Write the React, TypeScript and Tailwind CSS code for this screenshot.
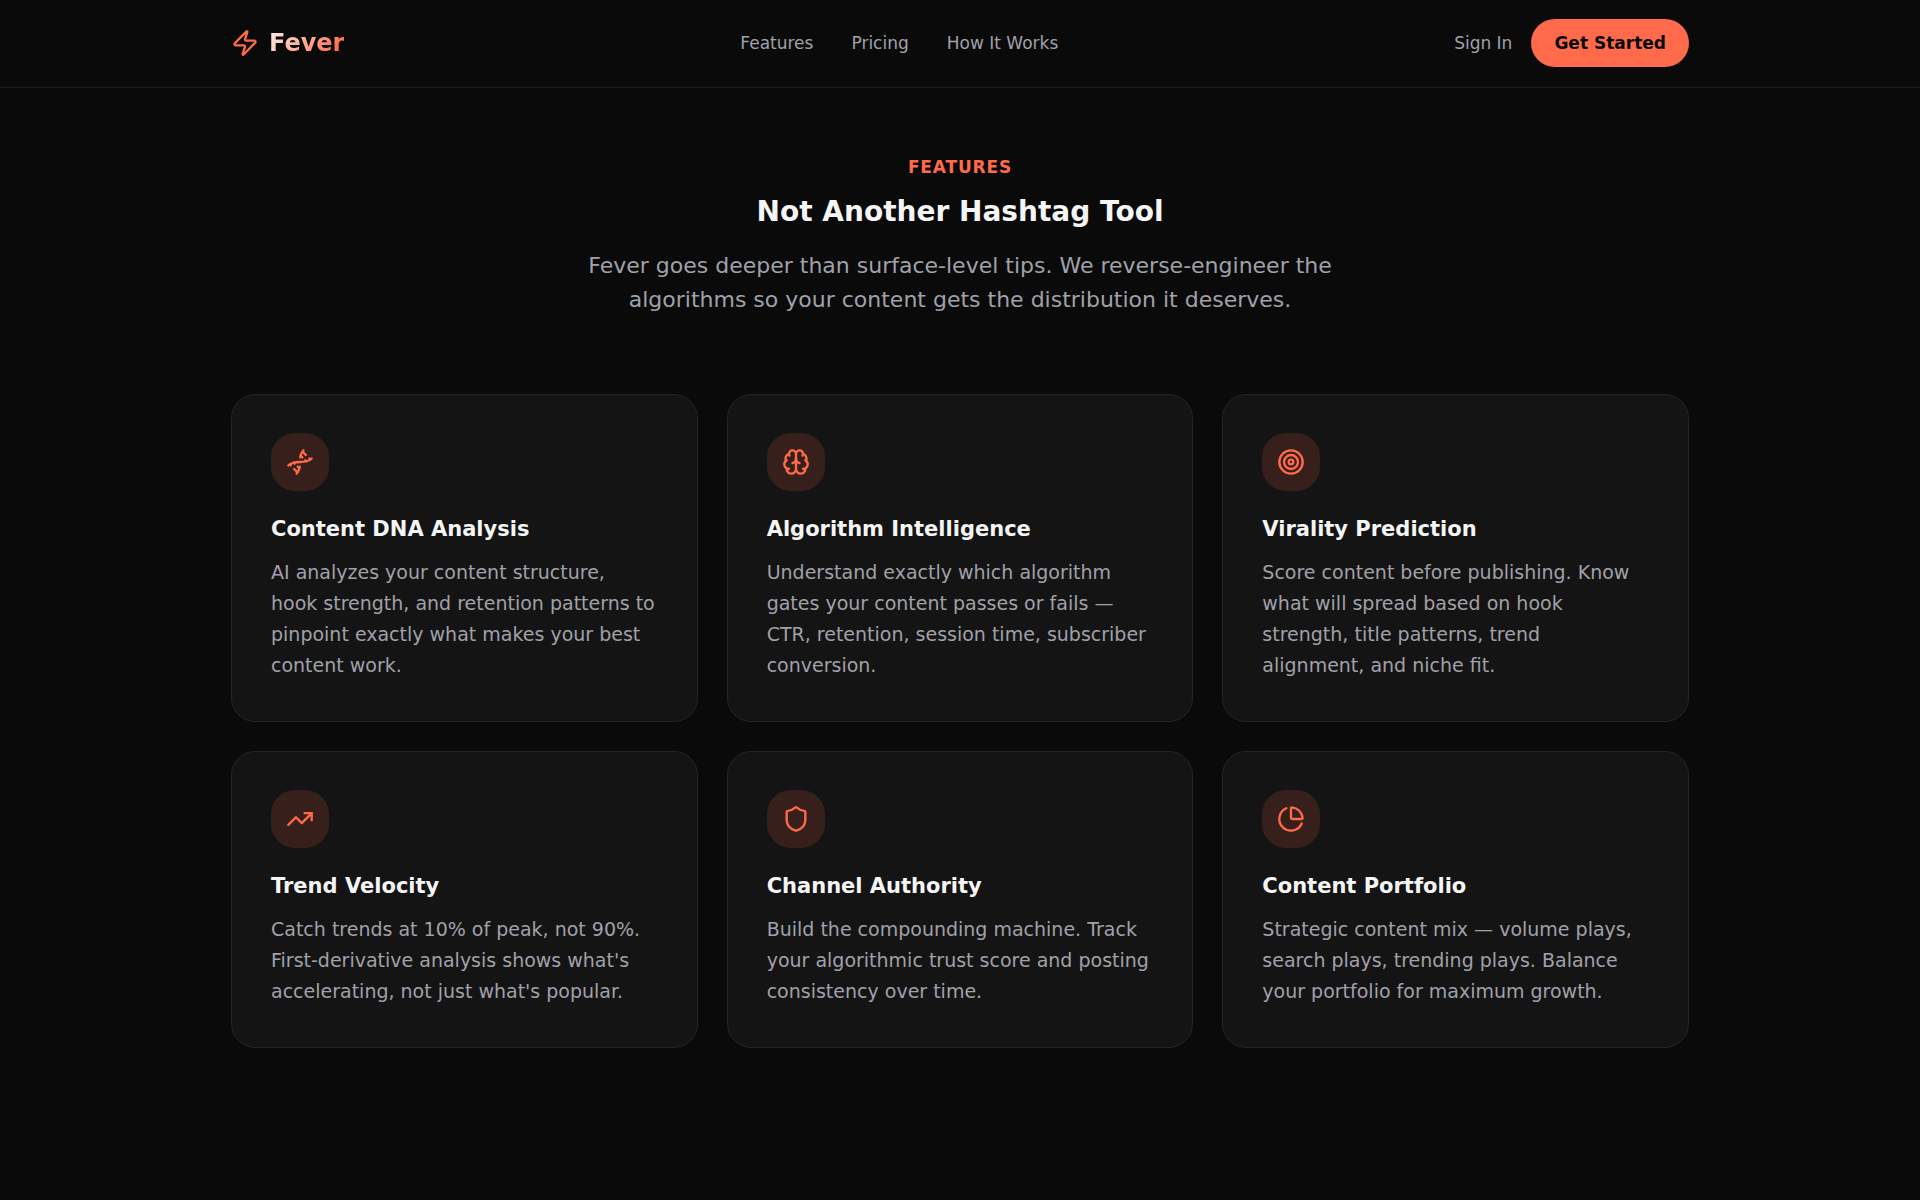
import React from "react";
import { Zap, Brain, Target, TrendingUp, Shield, PieChart, Dna } from "lucide-react";

const features = [
  { icon: Dna, title: "Content DNA Analysis", text: "AI analyzes your content structure, hook strength, and retention patterns to pinpoint exactly what makes your best content work." },
  { icon: Brain, title: "Algorithm Intelligence", text: "Understand exactly which algorithm gates your content passes or fails — CTR, retention, session time, subscriber conversion." },
  { icon: Target, title: "Virality Prediction", text: "Score content before publishing. Know what will spread based on hook strength, title patterns, trend alignment, and niche fit." },
  { icon: TrendingUp, title: "Trend Velocity", text: "Catch trends at 10% of peak, not 90%. First-derivative analysis shows what's accelerating, not just what's popular." },
  { icon: Shield, title: "Channel Authority", text: "Build the compounding machine. Track your algorithmic trust score and posting consistency over time." },
  { icon: PieChart, title: "Content Portfolio", text: "Strategic content mix — volume plays, search plays, trending plays. Balance your portfolio for maximum growth." },
];

export default function App() {
  return (
    <div className="min-h-screen bg-[#0a0a0a] font-['DejaVu_Sans',sans-serif] text-[#f5f5f5]">
      <header className="border-b border-[#1c1c1c]">
        <div className="mx-auto flex max-w-[1458px] items-center justify-between pt-[19px] pb-5 text-[17px] leading-6">
          <a href="#" className="flex items-center gap-2.5 text-2xl font-bold">
            <Zap size={28} className="text-[#ff6b4a]" />
            <span className="bg-linear-135 from-[#f5f5f5] to-[#ff6b4a] to-85% bg-clip-text text-transparent">Fever</span>
          </a>
          <nav className="flex gap-[38px] text-[#a1a1aa]">
            <a href="#features">Features</a>
            <a href="#pricing">Pricing</a>
            <a href="#how">How It Works</a>
          </nav>
          <div className="flex items-center gap-[19px]">
            <a href="#signin" className="text-[#a1a1aa]">Sign In</a>
            <button type="button" className="rounded-full bg-[#ff6b4a] px-[23px] py-3 font-bold text-[#0a0a0a]">Get Started</button>
          </div>
        </div>
      </header>
      <main id="features" className="mx-auto max-w-[1458px] pt-[67px] pb-20">
        <div className="mx-auto max-w-[760px] text-center">
          <p className="text-[17px] leading-6 font-bold tracking-wider text-[#ff6b4a]">FEATURES</p>
          <h1 className="mt-[15px] text-[28px] leading-9 font-bold">Not Another Hashtag Tool</h1>
          <p className="mt-[19px] text-[22px] leading-[34px] text-[#a1a1aa]">Fever goes deeper than surface-level tips. We reverse-engineer the algorithms so your content gets the distribution it deserves.</p>
        </div>
        <div className="mt-[77px] grid grid-cols-3 gap-[29px]">
          {features.map(({ icon: Icon, title, text }) => (
            <article key={title} className="rounded-3xl border border-[#242424] bg-[#141414] px-[39px] pt-[38px] pb-10">
              <div className="flex size-[58px] items-center justify-center rounded-3xl bg-[#37201b] text-[#ff6b4a]">
                <Icon size={28} />
              </div>
              <h2 className="mt-6 text-[21px] leading-7 font-bold">{title}</h2>
              <p className="mt-3.5 pr-0.5 text-[19px] leading-[31px] text-[#a1a1aa]">{text}</p>
            </article>
          ))}
        </div>
      </main>
    </div>
  );
}
